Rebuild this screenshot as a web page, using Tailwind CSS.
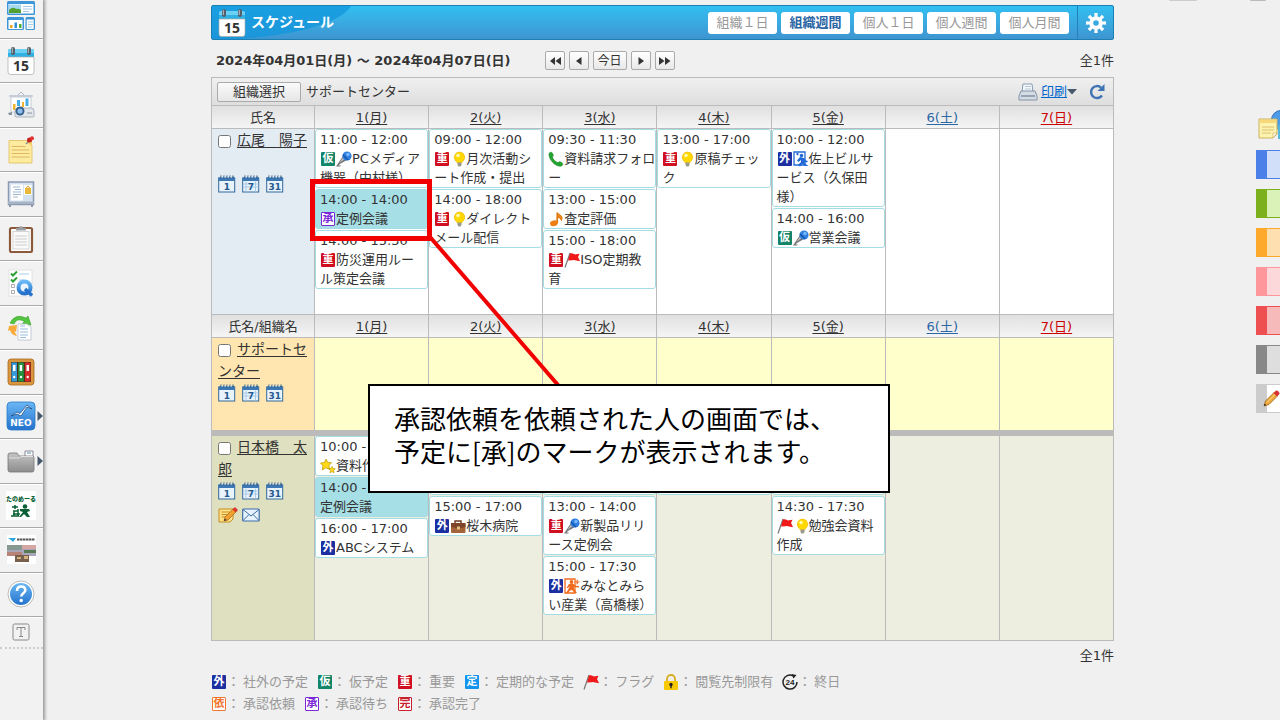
<!DOCTYPE html>
<html lang="ja">
<head>
<meta charset="utf-8">
<title>スケジュール</title>
<script src="https://cdn.jsdelivr.net/npm/@tailwindcss/browser@4"></script>
</head>
<body class="min-h-screen overflow-hidden bg-[#f0f0f0] font-['DejaVu_Sans','Noto_Sans_CJK_JP',sans-serif] text-[13px] text-[#333]">

<svg class="absolute size-0" aria-hidden="true">
  <defs>
    <linearGradient id="blueFill" x1="0" y1="0" x2="0" y2="1"><stop offset="0" stop-color="#6ab8f5"/><stop offset="1" stop-color="#2472cc"/></linearGradient>
    <linearGradient id="grayFill" x1="0" y1="0" x2="0" y2="1"><stop offset="0" stop-color="#c4c4c4"/><stop offset="1" stop-color="#8c8c8c"/></linearGradient>
  </defs>
</svg>
<svg class="hidden" aria-hidden="true">
  <symbol id="mic" viewBox="0 0 16 16"><path d="M0 15.500l2-3 5-7.500 4 4-7 4-1.500 1.500H5l-1 1z" fill="#777"/><path d="M3.500 12l4-6 1.500 1.500z" fill="#ccc"/><circle cx="11" cy="5" r="4.600" fill="#2f7fe0"/><path d="M7 4l5 5" stroke="#1550a8" stroke-width="1.200"/><circle cx="12" cy="3.500" r="1.700" fill="#7ab8ff"/></symbol>
  <symbol id="bulb" viewBox="0 0 16 16"><path d="M9.500 1a5.300 5.300 0 0 0-3.700 9c1 .8 1 1.300 1.200 1.800h5c.2-.5.2-1 1.200-1.800A5.300 5.300 0 0 0 9.500 1z" fill="#ffd800" stroke="#f0b400" stroke-width=".6"/><circle cx="8" cy="4.500" r="1.800" fill="#fff9b0"/><path d="M7.500 11.500h4V14l-1 1.500h-2l-1-1.500z" fill="#9a9a8a"/></symbol>
  <symbol id="phone" viewBox="0 0 16 16"><path d="M1 2.500C3 .5 4 1 5 3.500c.6 1.500 0 1.800-.7 2.500C5 8.500 7.500 11 10 11.700c.7-.7 1-1.300 2.500-.7 2.500 1 3 2 1 4C8 16.500.5 9 1 2.500z" fill="#22a52d" stroke="#138020" stroke-width=".6"/></symbol>
  <symbol id="note" viewBox="0 0 16 16"><path d="M9 1.500c1 2 3.500 2 5 5l-.5 2.500C12.500 7 10.500 6 9.500 6v6" fill="#f28c1c" stroke="#e07a10" stroke-width="1.200"/><path d="M9.200 2v10" stroke="#e07a10" stroke-width="1.600"/><ellipse cx="6" cy="12.300" rx="4" ry="2.800" fill="#ee7f14" transform="rotate(-15 6 12.300)"/></symbol>
  <symbol id="flag" viewBox="0 0 16 16"><path d="M1 15.500L6 1" stroke="#777" stroke-width="1.200"/><path d="M6 1.500c3-1 4 1.500 6 .8l3.500-.5L14 5l2 4c-3 .5-5-1.500-7.500-.8L4 8.500z" fill="#f01818"/></symbol>
  <symbol id="exit" viewBox="0 0 16 16"><path d="M1 1h11v13H1z" fill="#fff" stroke="#2269d8" stroke-width="1.300"/><circle cx="8.500" cy="4.500" r="1.800" fill="#2269d8"/><path d="M7 6l4 1 2 2.500 2 .5-1 1.500-2.500-.5.5 1.500 3.500 2.500H12L9.500 13 7 15.500 5 14l3-3V9L5.500 11 4 9.500z" fill="#2269d8"/><path d="M3 3h3M4.500 1.800v2.500" stroke="#2269d8"/></symbol>
  <symbol id="enter" viewBox="0 0 16 16"><path d="M1 1h10v14H1z" fill="#fff" stroke="#f06a1e" stroke-width="1.300"/><circle cx="7.500" cy="4" r="1.900" fill="#f06a1e"/><path d="M5 6l4-.3 3 2 3 .3v1.500l-3.500-.2-1.500-.8v2.500L13 15h-2.500L8 12l-2 .5L4 15H2l2.500-4L6 8 4 10H2.500z" fill="#f06a1e"/><path d="M11 4h4.500M13.200 1.800v4.400" stroke="#f06a1e" stroke-width="1.200"/></symbol>
  <symbol id="star" viewBox="0 0 16 16"><path d="M6 1l1.800 3.500 3.700.2-2.600 2.900 1 4L6 9.800 2.300 12l.6-4.200L.5 5l3.900-.5z" fill="#ffd91a" stroke="#b89400" stroke-width=".7"/><path d="M12 8.500l1 2 2.300.2-1.600 1.600.4 2.400-2.100-1.100-2 1.200.3-2.500-1.500-1.600 2.200-.2z" fill="#ffd91a" stroke="#b89400" stroke-width=".6"/></symbol>
  <symbol id="bag" viewBox="0 0 16 16"><path d="M5 5V3h6v2" fill="none" stroke="#6b3b20" stroke-width="1.400"/><rect x="1" y="5" width="14.500" height="10" rx="1" fill="#a5633c"/><path d="M1 5h14.500v4l-7 1.500L1 9z" fill="#7e452a"/><rect x="7" y="8.500" width="3" height="3" fill="#ddc07c"/></symbol>
  <symbol id="lock" viewBox="0 0 16 16"><path d="M4 8V5a4 4 0 0 1 8 0v3" fill="none" stroke="#d8ac20" stroke-width="1.800"/><rect x="1" y="7" width="14" height="9" rx="1" fill="#f8c800"/><circle cx="8" cy="10.500" r="1.700" fill="#222"/><path d="M7.300 11h1.400v3.200H7.300z" fill="#222"/></symbol>
  <symbol id="allday" viewBox="0 0 16 16"><path d="M15 8A7 7 0 1 1 11 1.700" fill="none" stroke="#222" stroke-width="1.500"/><path d="M9.500 0l5 1-3 3.500z" fill="#222"/><text x="8" y="11" font-size="8" font-weight="bold" text-anchor="middle" fill="#222" font-family="Liberation Sans">24</text></symbol>
  <symbol id="calFrame" viewBox="0 0 18 18"><rect x=".7" y="3" width="16" height="14" fill="#e9f3fc" stroke="#32689c" stroke-width="1"/><path d="M.5 2.500h16.500V6H.5z" fill="#3c79b4"/><path d="M3 .5v3M6 .5v3M9 .5v3M12 .5v3M15 .5v3" stroke="#2b5480" stroke-width="1.100"/><path d="M4 1v2M7 1v2M10 1v2M13 1v2" stroke="#dcebf8" stroke-width=".8"/></symbol>
  <symbol id="cal1" viewBox="0 0 18 18"><use href="#calFrame"/><text x="8.800" y="15" font-size="9" font-weight="bold" text-anchor="middle" fill="#24598f" font-family="DejaVu Sans">1</text></symbol>
  <symbol id="cal7" viewBox="0 0 18 18"><use href="#calFrame"/><path d="M1.500 9h15M1.500 12h15M4 6.500v10M13.500 6.500v10" stroke="#a9c9e6"/><text x="8.800" y="15" font-size="9" font-weight="bold" text-anchor="middle" fill="#24598f" font-family="DejaVu Sans">7</text></symbol>
  <symbol id="cal31" viewBox="0 0 18 18"><use href="#calFrame"/><text x="8.800" y="15" font-size="9" font-weight="bold" text-anchor="middle" fill="#24598f" font-family="DejaVu Sans">31</text></symbol>
  <symbol id="memo" viewBox="0 0 20 18"><path d="M1 3h14v10l-3 3H1z" fill="#ffe28a" stroke="#c58c1e"/><path d="M3.500 6h8M3.500 8.500h6M3.500 11h5" stroke="#c58c1e"/><path d="M6 15l1-4 8.500-8.500 3 3L10 14z" fill="#f0a030" stroke="#a86412" stroke-width=".7"/><path d="M14.500 3.500L17 1l3 3-2.500 2.500z" fill="#d93a30"/><path d="M6 15l.8-2.500L8.600 14z" fill="#333"/></symbol>
  <symbol id="mail" viewBox="0 0 18 14"><rect x=".7" y="1" width="16.500" height="12" rx="1" fill="#e6f2fd" stroke="#3d6da8" stroke-width="1.200"/><path d="M1 1.500l8 6.500 8-6.500M1 12.500l6-6M17 12.500l-6-6" fill="none" stroke="#3d6da8"/></symbol>
  <symbol id="calendar" viewBox="0 0 28 28"><path d="M1 4q0-2 2-2h22q2 0 2 2v6H1z" fill="#2fb1e4"/><path d="M1 10h26v15q0 2.500-2.500 2.500h-21Q1 27.500 1 25z" fill="#fff" stroke="#aaa" stroke-width=".7"/><path d="M1 4q0-2 2-2h22q2 0 2 2v2H1z" fill="#6bd0f3"/><rect x="4" y="0" width="4" height="8" rx="2" fill="#55606a"/><rect x="20" y="0" width="4" height="8" rx="2" fill="#55606a"/><path d="M5.300 1v5M21.300 1v5" stroke="#b8c0c8"/><text x="14" y="23.500" font-size="14" font-weight="bold" text-anchor="middle" fill="#333" font-family="Noto Sans">15</text></symbol>
</svg>

<div class="relative flex min-h-screen items-stretch">

  <nav aria-label="アプリ" class="w-[43px] shrink-0 bg-[#f2f2f2] shadow-[1px_0_3px_1px_#999] [&_a]:relative [&_a]:flex [&_a]:items-center [&_a]:justify-center [&_a]:border-b [&_a]:border-[#aaa] [&_a]:shadow-[0_1px_0_#fff] [&_a]:pr-px">
    <a href="#" aria-label="ポータル" class="h-[39px] pb-[6px]"><svg class="size-[30px]" viewBox="0 0 30 30"><rect x="1" y="0" width="28" height="14" rx="1.500" fill="#3c96d8"/><rect x="2.500" y="3" width="25" height="9.500" fill="#fff"/><rect x="3" y="3.500" width="12" height="8.500" fill="#a5d8ee"/><path d="M3 12V9q4-4 7-1 3-1 5 1v3z" fill="#52a030"/><path d="M17 5.500h9M17 8h9M17 10.500h6" stroke="#aacbe8"/><rect x="1" y="16" width="17" height="13" rx="1.500" fill="#3c96d8"/><rect x="2.500" y="19" width="14" height="9" fill="#fff"/><path d="M4 24h2.500v3H4z" fill="#f0a020"/><path d="M8.500 21.500H11V27H8.500z" fill="#2d8fd8"/><path d="M13 23h2.500v4H13z" fill="#57b030"/><rect x="19.500" y="16" width="9.500" height="13" rx="1.500" fill="#3c96d8"/><rect x="20.700" y="18.500" width="7" height="9.500" fill="#fff"/><path d="M22 21h5M22 23.500h5M22 26h4" stroke="#aacbe8"/></svg></a>
    <div class="grid h-[578px] auto-rows-fr">
      <a href="#" aria-label="スケジュール"><svg class="size-[28px]"><use href="#calendar"/></svg></a>
      <a href="#" aria-label="設備予約"><svg class="size-[28px]" viewBox="0 0 28 28"><path d="M11 4l3-3 3 3" fill="none" stroke="#b0b8c4"/><rect x="2" y="4" width="24" height="2" rx="1" fill="#c5ccd6"/><path d="M4 6h20v15H4z" fill="#fff" stroke="#c5ccd6"/><path d="M6 13h2.500v6H6z" fill="#f0b430"/><path d="M10 9h3v6h-3z" fill="#45aee8"/><path d="M15 11h2v5h-2z" fill="#f0b430"/><path d="M18.500 7.500h3V15h-3z" fill="#45aee8"/><path d="M8 20q0-3 3-3h13q3 0 3 3v5q0 1-1 1H9q-1 0-1-1z" fill="#e3e7ec" stroke="#9aa4b0" stroke-width=".8"/><circle cx="13" cy="20" r="4.500" fill="#35608e"/><circle cx="13" cy="20" r="2.600" fill="#8fc0ec"/><path d="M1 22l4-1v3H2z" fill="#8894a2"/><path d="M20 22h5" stroke="#8894a2"/></svg></a>
      <a href="#" aria-label="メモ"><svg class="size-[28px]" viewBox="0 0 28 28"><path d="M2 4.500h18l5 5V27H2z" fill="#fdeba0" stroke="#dfbd5c" stroke-width=".8"/><path d="M18 4h7v7z" fill="#f4d06c"/><path d="M4.500 10.500h14M4.500 14h18M4.500 17.500h18M4.500 21h18" stroke="#e0b860" stroke-width="1.200"/><path d="M19 8l3-3" stroke="#888" stroke-width="1.500"/><circle cx="22.500" cy="4" r="2.500" fill="#c42020"/><circle cx="25" cy="2.300" r="2" fill="#e23030"/></svg></a>
      <a href="#" aria-label="掲示板"><svg class="size-[28px]" viewBox="0 0 28 28"><path d="M3 24v3M25 24v3" stroke="#8b9ab0" stroke-width="2"/><rect x="1.500" y="2" width="25" height="22.500" fill="#d4e2f0" stroke="#8b9ab0" stroke-width="1.500"/><path d="M1 21.500h26V24H1z" fill="#a6b4c6"/><rect x="4" y="4.500" width="12" height="16" fill="#fff"/><path d="M6 7h7M8 9.500h6M6 12h8M6 14.500h8M6 17h5" stroke="#9cb4cc"/><rect x="17" y="5" width="7.500" height="10" fill="#fff"/><path d="M18 8h6v6h-6z" fill="#e8b83a"/><path d="M19.500 8q1.500-4 3 0" stroke="#d09820" fill="none"/></svg></a>
      <a href="#" aria-label="回覧"><svg class="size-[28px]" viewBox="0 0 28 28"><rect x="3" y="3" width="22" height="24" rx="1.500" fill="#fff" stroke="#8b5a3a" stroke-width="2.200"/><path d="M9 5V3h3q2-4 4 0h3v2.500H9z" fill="#9aa0a6"/><rect x="6" y="6.500" width="16" height="17.500" fill="#fafafa" stroke="#ccc" stroke-width=".8"/><path d="M8 11h12M8 14h12M8 17h12M8 20h12" stroke="#ccc"/></svg></a>
      <a href="#" aria-label="アンケート"><svg class="size-[28px]" viewBox="0 0 28 28"><path d="M2 1h23v26H2z" fill="#fff" stroke="#ddd" stroke-width=".8"/><path d="M4 4.500l2 2 4-4M4 10.500l2 2 4-4" fill="none" stroke="#2aa035" stroke-width="2"/><path d="M12 5h10M12 11h5" stroke="#a8cbe8"/><path d="M4.500 15.500h3v3h-3zM4.500 21.500h3v3h-3z" fill="none" stroke="#aaa"/><circle cx="17.500" cy="18.500" r="6" fill="#eaf5ff" stroke="url(#blueFill)" stroke-width="4"/><path d="M18 20l7 6.500" stroke="#2472cc" stroke-width="3.500"/></svg></a>
      <a href="#" aria-label="ワークフロー"><svg class="size-[28px]" viewBox="0 0 28 28"><path d="M3 10Q8 0 19 5l2-2 3 9-9-1 2.500-2.500Q10 4 7 11z" fill="#53c540" stroke="#35a028" stroke-width=".6"/><path d="M2 13l8-1-1 7-2-1 3 5q-6-1-7-6l-2 1z" fill="#f8a93a"/><path d="M11 11h9l4 3v13H11z" fill="#fff" stroke="#b8c0cc" stroke-width=".8"/><path d="M13 16h8M13 19h8M13 22h8M13 24.500h6M13 13h5" stroke="#9bbbe0"/></svg></a>
      <a href="#" aria-label="文書管理"><svg class="size-[28px]" viewBox="0 0 28 28"><rect x="1" y="1" width="26" height="26" rx="3" fill="#d9963e" stroke="#a86a20" stroke-width=".8"/><rect x="4" y="4" width="20" height="20" fill="#4c321c"/><path d="M4.500 4.500h5.500v19H4.500z" fill="#3699d8"/><path d="M11.200 4.500h5.600v19h-5.600z" fill="#229440"/><path d="M18 4.500h5.500v19H18z" fill="#d42a2a"/><path d="M6 7h2.500v6H6zM12.700 7h2.500v6h-2.500zM19.500 7H22v6h-2.500z" fill="#fff"/><circle cx="7.200" cy="19" r="1.200" fill="#fff"/><circle cx="14" cy="19" r="1.200" fill="#fff"/><circle cx="20.700" cy="19" r="1.200" fill="#fff"/></svg></a>
      <a href="#" aria-label="NEO"><svg class="size-[30px]" viewBox="0 0 30 30"><rect x="1" y="1" width="28" height="28" rx="4" fill="url(#blueFill)" stroke="#2a7ac4" stroke-width=".8"/><path d="M5 15l6-4 3 1.500L21 4l5 4-5-2-6 9-4-2z" fill="#fff" stroke="#1d4f86" stroke-width=".8"/><text x="15" y="25" font-size="9" font-weight="bold" text-anchor="middle" fill="#fff" font-family="DejaVu Sans">NEO</text></svg><svg class="absolute right-0 h-[10px] w-[6px]" viewBox="0 0 6 10"><path d="M.5 0L6 5 .5 10z" fill="#46586c"/></svg></a>
      <a href="#" aria-label="フォルダ"><svg class="size-[28px]" viewBox="0 0 28 28"><path d="M18 4h8v6h-8z" fill="#fff" stroke="#889"/><path d="M20 6h4" stroke="#58a"/><path d="M1 8q0-2 2-2h7l2 3h13q2 0 2 2v12q0 2-2 2H3q-2 0-2-2z" fill="url(#grayFill)" stroke="#777" stroke-width=".8"/><path d="M2 11h10l2-1.500h12" stroke="#e0e0e0" fill="none"/></svg><svg class="absolute right-0 h-[10px] w-[6px]" viewBox="0 0 6 10"><path d="M.5 0L6 5 .5 10z" fill="#46586c"/></svg></a>
      <a href="#" aria-label="たのめーる"><span class="flex h-[29px] w-[30px] flex-col items-center bg-white pt-[3px] text-[6px] leading-[9px] font-black whitespace-nowrap text-[#086034]">たのめーる<svg class="mt-px h-[13px] w-[20px]" viewBox="0 0 20 13"><path d="M1 3h6M4 1v4M2 7h5M2 10h7M3 7v5M7 5v7M0 12h8" stroke="#086034" stroke-width="1.500"/><circle cx="14" cy="2.500" r="2.300" fill="#086034"/><path d="M9 5h9l1 2-3 1 3 5h-3l-3-3-3 3H8l4-5-3-1z" fill="#086034"/></svg></span></a>
      <a href="#" aria-label="お知らせ"><svg class="size-[29px]" viewBox="0 0 29 29"><path d="M0 0h29v29H0z" fill="#fff"/><path d="M1 3h8L6 7 4 5z" fill="#28a5dc"/><path d="M10 4.500h18" stroke="#555" stroke-width="2" stroke-dasharray="2.500 .5"/><path d="M0 10h29v11H0z" fill="#a8a6b8"/><path d="M0 10h15v5H0z" fill="#869a92"/><path d="M15 10h14v4H15z" fill="#d6a6a2"/><path d="M0 17h15v4H0z" fill="#b78378"/><path d="M17 15h12v3H17z" fill="#587b54"/><path d="M8 20h14v7H8z" fill="#77604e"/><path d="M10 22h4v2h-4zM17 21h4v3h-4z" fill="#d8b27c"/></svg></a>
      <a href="#" aria-label="ヘルプ"><svg class="size-[28px]" viewBox="0 0 28 28"><circle cx="14" cy="14" r="13" fill="#fff" stroke="#aaa" stroke-width=".8"/><circle cx="14" cy="14" r="11" fill="url(#blueFill)"/><path d="M10 11q0-4.500 4.200-4.500T18.300 10.300c0 3-4.100 3-4.100 6.200" fill="none" stroke="#fff" stroke-width="2.600"/><circle cx="14.200" cy="20.500" r="1.700" fill="#fff"/></svg></a>
    </div>
    <div class="flex h-[32px] items-center justify-center border-b-2 border-dotted border-[#ccc] pr-[2px]"><svg class="size-[18px]" viewBox="0 0 18 18"><rect x="1" y="1" width="16" height="16" rx="1.500" fill="none" stroke="#888"/><path d="M5 7V4.500h8V7M9 4.500v9M7 13.500h4" fill="none" stroke="#888"/></svg></div>
  </nav>

  <main class="relative min-w-0 flex-1 pt-[5px] pr-[166px] pl-[168px] [&_b]:mx-px [&_b]:inline-block [&_b]:size-[14px] [&_b]:rounded-[1px] [&_b]:text-center [&_b]:text-[11px] [&_b]:leading-[14px] [&_b]:font-bold [&_b]:text-white">

    <header class="relative flex h-[35px] items-center rounded-[2px] border border-[#1c7fb4] bg-linear-to-b from-[#31bff2] to-[#3e95d0]">
      <svg class="absolute top-0 left-0 h-[33px] w-[140px]" viewBox="0 0 140 33" aria-hidden="true"><path d="M0 0h139C128 18 80 30 22 33H0z" fill="#1295dc" opacity=".75"/></svg>
      <svg class="relative ml-[6px] size-[28px]"><use href="#calendar"/></svg>
      <h1 class="relative ml-[5px] text-[14px] font-bold text-white">スケジュール</h1>
      <div class="ml-auto flex gap-1 [&_button]:h-[22px] [&_button]:w-[69px] [&_button]:rounded-[3px] [&_button]:bg-white [&_button]:leading-[20px]">
        <button class="text-[#999]">組織１日</button>
        <button class="font-bold text-[#2b66a5]">組織週間</button>
        <button class="text-[#999]">個人１日</button>
        <button class="text-[#999]">個人週間</button>
        <button class="text-[#999]">個人月間</button>
      </div>
      <button aria-label="設定" class="ml-2 flex h-full w-[36px] items-center justify-center border-l border-[#2580b8]"><svg class="size-[20px]" viewBox="0 0 20 20"><g fill="#fff"><path id="tooth" d="M8.300 0h3.400l-.4 5H8.700zM8.300 20h3.400l-.4-5H8.700z"/><use href="#tooth" transform="rotate(45 10 10)"/><use href="#tooth" transform="rotate(90 10 10)"/><use href="#tooth" transform="rotate(135 10 10)"/></g><circle cx="10" cy="10" r="4.800" fill="none" stroke="#fff" stroke-width="4"/></svg></button>
    </header>

    <div class="flex h-[37px] items-center pt-[4px] pl-[5px]">
      <h2 class="text-[13px] font-bold">2024年04月01日(月) ～ 2024年04月07日(日)</h2>
      <div class="ml-[34px] flex gap-1 [&_button]:flex [&_button]:h-[19px] [&_button]:items-center [&_button]:justify-center [&_button]:rounded-[2px] [&_button]:border [&_button]:border-[#aaa] [&_button]:bg-linear-to-b [&_button]:from-white [&_button]:to-[#e8e8e8] [&_svg]:h-[8px] [&_svg]:fill-[#333]">
        <button aria-label="前週" class="w-[20px]"><svg class="w-[12px]" viewBox="0 0 12 8"><path d="M6 0v8L1 4zM12 0v8L6.500 4z"/></svg></button>
        <button aria-label="前日" class="w-[20px]"><svg class="w-[6px]" viewBox="0 0 6 8"><path d="M5.500 0v8L0 4z"/></svg></button>
        <button class="w-[34px] text-[12px] leading-none">今日</button>
        <button aria-label="翌日" class="w-[20px]"><svg class="w-[6px]" viewBox="0 0 6 8"><path d="M.5 0v8L6 4z"/></svg></button>
        <button aria-label="翌週" class="w-[20px]"><svg class="w-[12px]" viewBox="0 0 12 8"><path d="M0 0v8l5.500-4zM6 0v8l5.500-4z"/></svg></button>
      </div>
      <span class="ml-auto">全1件</span>
    </div>

    <div class="flex h-[28px] items-center border border-b-0 border-[#bbb] bg-linear-to-b from-[#f0f0f0] to-[#dedede] pr-2 pl-[5px]">
      <button class="h-[20px] w-[84px] rounded-[2px] border border-[#aaa] bg-linear-to-b from-[#fafafa] to-[#e6e6e6] leading-[17px]">組織選択</button>
      <span class="ml-[5px]">サポートセンター</span>
      <svg class="ml-auto size-[20px]" viewBox="0 0 20 20" aria-hidden="true"><path d="M5 2h9l1 8H4z" fill="#f4f8fc" stroke="#8a9cb0"/><path d="M7 4.500h6M7 7h6" stroke="#b8c8d8"/><path d="M3 9h14l2 5v4H1v-4z" fill="#d3dbe4" stroke="#8292a6"/><path d="M3 14h14" stroke="#8292a6" stroke-width="1.500"/></svg>
      <a href="#" class="ml-[3px] text-[#06c] underline">印刷</a>
      <svg class="h-[6px] w-[10px]" viewBox="0 0 10 6" aria-hidden="true"><path d="M0 0h10L5 5.500z" fill="#46586c"/></svg>
      <button aria-label="更新" class="ml-3"><svg class="size-[16px]" viewBox="0 0 16 16"><path d="M13 11.500A6 6 0 1 1 12 3.500" fill="none" stroke="#3f74b4" stroke-width="2.400"/><path d="M15.500 0v7H8.500z" fill="#3f74b4"/></svg></button>
    </div>

    <table class="w-full table-fixed border-separate border-spacing-0 border-t border-l border-[#bbb] [&_a]:underline [&_a]:underline-offset-2 [&_li]:mb-px [&_li]:rounded-[3px] [&_li]:border [&_li]:border-[#a3dce2] [&_li]:bg-white [&_li]:pl-1 [&_li]:leading-[19px] [&_li]:whitespace-nowrap [&_li_b]:mt-[3px] [&_li_b]:align-top [&_li_svg]:mt-[2px] [&_li_svg]:inline-block [&_li_svg]:size-[16px] [&_li_svg]:align-top [&_td]:border-r [&_td]:border-b [&_td]:border-[#bbb] [&_td]:p-0 [&_td]:align-top [&_th]:border-r [&_th]:border-b [&_th]:border-[#bbb] [&_th]:p-0 [&_th]:pt-[2px] [&_th]:font-normal">
      <colgroup><col class="w-[103px]"><col><col><col><col><col><col><col></colgroup>
      <thead>
        <tr class="h-[23px] bg-linear-to-b from-[#e0e0e0] to-[#f6f6f6]">
          <th scope="col">氏名</th><th scope="col"><a href="#">1(月)</a></th><th scope="col"><a href="#">2(火)</a></th><th scope="col"><a href="#">3(水)</a></th><th scope="col"><a href="#">4(木)</a></th><th scope="col"><a href="#">5(金)</a></th><th scope="col" class="text-[#2b66a5]"><a href="#">6(土)</a></th><th scope="col" class="text-[#c00]"><a href="#">7(日)</a></th>
        </tr>
      </thead>
      <tbody>
        <tr class="h-[186px] bg-white">
          <td class="bg-[#e3ebf3]">
            <div class="pl-[6px] text-[14px] leading-[22px]"><input id="u1" type="checkbox" class="mr-[6px] size-[13px] align-[-3px]"><label for="u1"><a href="#">広尾　陽子</a></label></div>
            <div class="mt-[24px] flex gap-[6px] pl-[6px] [&_svg]:size-[18px]"><svg><use href="#cal1"/></svg><svg><use href="#cal7"/></svg><svg><use href="#cal31"/></svg></div>
          </td>
          <td><ul>
            <li>11:00 - 12:00<br><b class="bg-[#128467]">仮</b><svg><use href="#mic"/></svg>PCメディア<br>機器（中村様）</li>
            <li class="bg-[#a6dfe6]!">14:00 - 14:00<br><b class="border border-[#7a28d8] bg-white leading-[12px]! text-[#7a28d8]!">承</b>定例会議</li>
            <li>14:00 - 15:30<br><b class="bg-[#d01020]">重</b>防災運用ルー<br>ル策定会議</li>
          </ul></td>
          <td><ul>
            <li>09:00 - 12:00<br><b class="bg-[#d01020]">重</b><svg><use href="#bulb"/></svg>月次活動シ<br>ート作成・提出</li>
            <li>14:00 - 18:00<br><b class="bg-[#d01020]">重</b><svg><use href="#bulb"/></svg>ダイレクト<br>メール配信</li>
          </ul></td>
          <td><ul>
            <li>09:30 - 11:30<br><svg><use href="#phone"/></svg>資料請求フォロ<br>ー</li>
            <li>13:00 - 15:00<br><svg><use href="#note"/></svg>査定評価</li>
            <li>15:00 - 18:00<br><b class="bg-[#d01020]">重</b><svg><use href="#flag"/></svg>ISO定期教<br>育</li>
          </ul></td>
          <td><ul>
            <li>13:00 - 17:00<br><b class="bg-[#d01020]">重</b><svg><use href="#bulb"/></svg>原稿チェッ<br>ク</li>
          </ul></td>
          <td><ul>
            <li>10:00 - 12:00<br><b class="bg-[#1c2fa0]">外</b><svg><use href="#exit"/></svg>佐上ビルサ<br>ービス（久保田<br>様）</li>
            <li>14:00 - 16:00<br><b class="bg-[#128467]">仮</b><svg><use href="#mic"/></svg>営業会議</li>
          </ul></td>
          <td></td><td></td>
        </tr>
        <tr class="h-[23px] bg-linear-to-b from-[#e0e0e0] to-[#f6f6f6]">
          <th scope="col">氏名/組織名</th><th scope="col"><a href="#">1(月)</a></th><th scope="col"><a href="#">2(火)</a></th><th scope="col"><a href="#">3(水)</a></th><th scope="col"><a href="#">4(木)</a></th><th scope="col"><a href="#">5(金)</a></th><th scope="col" class="text-[#2b66a5]"><a href="#">6(土)</a></th><th scope="col" class="text-[#c00]"><a href="#">7(日)</a></th>
        </tr>
        <tr class="h-[98px] bg-[#ffffcc] [&_td]:border-b-6!">
          <td class="bg-[#ffe6b0]">
            <div class="pl-[6px] text-[14px] leading-[22px]"><input id="u2" type="checkbox" class="mr-[6px] size-[13px] align-[-3px]"><label for="u2"><a href="#">サポートセ<br>ンター</a></label></div>
            <div class="mt-[2px] flex gap-[6px] pl-[6px] [&_svg]:size-[18px]"><svg><use href="#cal1"/></svg><svg><use href="#cal7"/></svg><svg><use href="#cal31"/></svg></div>
          </td>
          <td></td><td></td><td></td><td></td><td></td><td></td><td></td>
        </tr>
        <tr class="h-[205px] bg-[#eeeee0]">
          <td class="bg-[#dfe0c0]">
            <div class="pl-[6px] text-[14px] leading-[22px]"><input id="u3" type="checkbox" class="mr-[6px] size-[13px] align-[-3px]"><label for="u3"><a href="#">日本橋　太<br>郎</a></label></div>
            <div class="mt-[2px] flex gap-[6px] pl-[6px] [&_svg]:size-[18px]"><svg><use href="#cal1"/></svg><svg><use href="#cal7"/></svg><svg><use href="#cal31"/></svg></div>
            <div class="mt-[6px] flex items-center gap-1 pl-[6px]"><svg class="h-[18px] w-[20px]"><use href="#memo"/></svg><svg class="h-[14px] w-[18px]"><use href="#mail"/></svg></div>
          </td>
          <td><ul>
            <li>10:00 -<br><svg><use href="#star"/></svg>資料作</li>
            <li class="bg-[#a6dfe6]!">14:00 -<br>定例会議</li>
            <li>16:00 - 17:00<br><b class="bg-[#1c2fa0]">外</b>ABCシステム</li>
          </ul></td>
          <td><ul>
            <li class="h-[59px]"></li>
            <li>15:00 - 17:00<br><b class="bg-[#1c2fa0]">外</b><svg><use href="#bag"/></svg>桜木病院</li>
          </ul></td>
          <td><ul>
            <li class="h-[59px]"></li>
            <li>13:00 - 14:00<br><b class="bg-[#d01020]">重</b><svg><use href="#mic"/></svg>新製品リリ<br>ース定例会</li>
            <li>15:00 - 17:30<br><b class="bg-[#1c2fa0]">外</b><svg><use href="#enter"/></svg>みなとみら<br>い産業（高橋様）</li>
          </ul></td>
          <td><ul><li class="h-[59px]"></li></ul></td>
          <td><ul>
            <li class="h-[59px]"></li>
            <li>14:30 - 17:30<br><svg><use href="#flag"/></svg><svg><use href="#bulb"/></svg>勉強会資料<br>作成</li>
          </ul></td>
          <td></td><td></td>
        </tr>
      </tbody>
    </table>

    <p class="pt-[5px] text-right leading-[20px]">全1件</p>

    <ul class="mt-[5px] text-[#999] [&_i]:ml-[3px] [&_i]:not-italic [&_li]:flex [&_li]:h-[22px] [&_li]:items-center [&_li]:gap-[9px] [&_span]:flex [&_span]:items-center [&_svg]:size-[16px]">
      <li><span><b class="bg-[#1c2fa0]">外</b>：<i>社外の予定</i></span><span><b class="bg-[#128467]">仮</b>：<i>仮予定</i></span><span><b class="bg-[#d01020]">重</b>：<i>重要</i></span><span><b class="bg-[#1494ee]">定</b>：<i>定期的な予定</i></span><span><svg><use href="#flag"/></svg>：<i>フラグ</i></span><span><svg><use href="#lock"/></svg>：<i>閲覧先制限有</i></span><span><svg><use href="#allday"/></svg>：<i>終日</i></span></li>
      <li><span><b class="border border-[#f07830] bg-white leading-[12px]! text-[#f07830]!">依</b>：<i>承認依頼</i></span><span><b class="border border-[#7a28d8] bg-white leading-[12px]! text-[#7a28d8]!">承</b>：<i>承認待ち</i></span><span><b class="border border-[#c8202c] bg-white leading-[12px]! text-[#c8202c]!">完</b>：<i>承認完了</i></span></li>
    </ul>

    <!-- Annotation: marked event, leader line and callout -->
    <div class="absolute top-[179px] left-[267px] h-[62px] w-[122px] border-5 border-[#f00000]"></div>
    <svg class="absolute top-[236px] left-[385px] h-[150px] w-[134px]" viewBox="0 0 134 150" aria-hidden="true"><path d="M2 1l128 148" stroke="#f00000" stroke-width="4"/></svg>
    <div class="absolute top-[384px] left-[325px] h-[109px] w-[522px] border-2 border-black bg-white pt-[15px] pl-[24px] font-['Noto_Sans_CJK_JP',sans-serif] text-[26px] leading-[33px] whitespace-nowrap text-black">承認依頼を依頼された人の画面では、<br>予定に[承]のマークが表示されます。</div>
  </main>

  <aside aria-label="付箋" class="absolute top-[110px] right-0 flex w-[24px] flex-col gap-[10px] overflow-hidden [&_button]:h-[29px] [&_button]:w-[34px] [&_button]:border-y [&_button]:border-l-11">
    <svg class="h-[30px] w-[24px]" viewBox="0 0 24 30"><circle cx="25" cy="10" r="9.500" fill="#4f9be8" stroke="#2c6fbe"/><path d="M22 18q3-8 6-6v17h-6z" fill="#58b8dc"/><path d="M3 9h18v15l-4 4H3z" fill="#fdf3b0" stroke="#cdb25c"/><path d="M4 10h16v3H4z" fill="#f6d878"/><path d="M6 17h12M6 20h12M6 23h9" stroke="#dcc070"/><path d="M21 23h-4v5z" fill="#fff" stroke="#cdb25c" stroke-width=".7"/></svg>
    <button aria-label="青" class="border-[#4a80e8] bg-[#d2dff8]"></button>
    <button aria-label="緑" class="border-[#7cb01c] bg-[#daf2b8]"></button>
    <button aria-label="橙" class="border-[#fda92c] bg-[#fddfb0]"></button>
    <button aria-label="桃" class="border-[#fd979b] bg-[#fdd8da]"></button>
    <button aria-label="赤" class="border-[#ee5052] bg-[#f7babb]"></button>
    <button aria-label="灰" class="border-[#888] bg-[#dedede]"></button>
    <button aria-label="編集" class="border-[#ccc] bg-white"><svg class="-ml-1 size-[17px]" viewBox="0 0 17 17"><path d="M1 16l1.500-5L11 2.500l3.500 3.500L6 14.500z" fill="#efa63a" stroke="#8f5a18" stroke-width=".7"/><path d="M4 12.500l8.500-8.500" stroke="#ffe08a"/><path d="M10.500 3L13 .5q1-.5 2.500 1t1 2.500L14 6.500z" fill="#d83434"/><path d="M1 16l.7-2.300L3.300 15z" fill="#222"/></svg></button>
  </aside>

  <div class="absolute top-0 right-[83px] h-px w-[28px] rounded-b-full bg-[#ccc]"></div>
  <div class="absolute top-0 right-[14px] h-px w-[16px] rounded-b-full bg-[#bbb]"></div>
</div>
</body>
</html>
